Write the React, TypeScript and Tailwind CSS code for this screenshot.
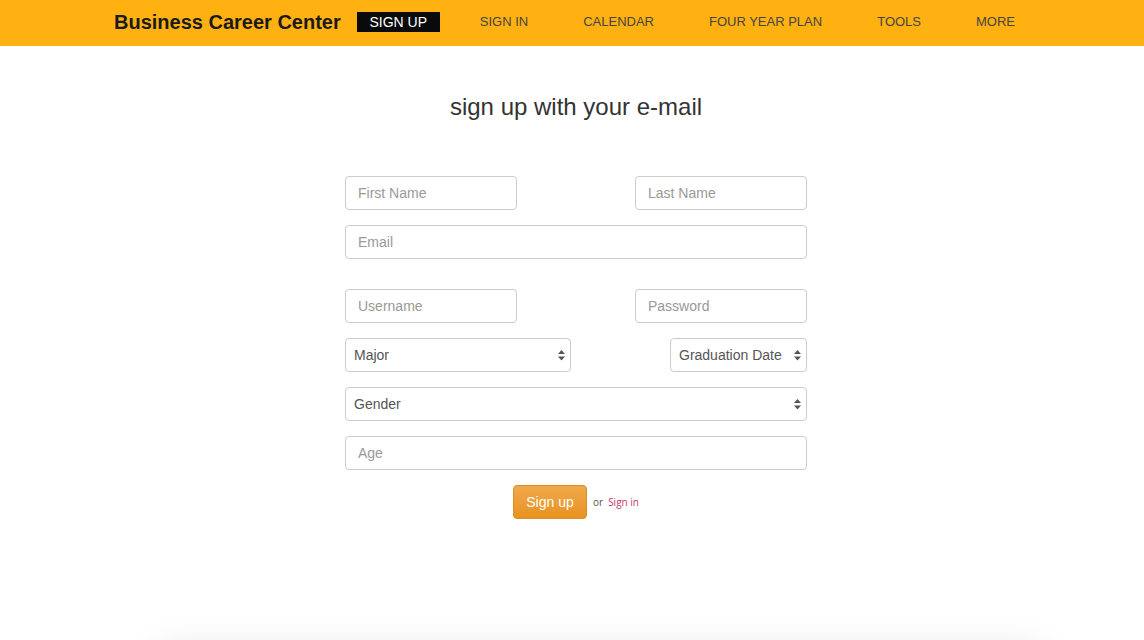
import React from 'react'

// Sign-up page for the Business Career Center.

const NAV_ITEMS = ['SIGN IN', 'CALENDAR', 'FOUR YEAR PLAN', 'TOOLS', 'MORE']

const inputCls =
  'h-[34px] rounded-[4px] border border-[#cccccc] bg-white px-3 text-[14px] text-[#555] placeholder:text-[#999] outline-none'

function Arrows() {
  return (
    <svg width="7" height="11" viewBox="0 0 7 11" className="pointer-events-none absolute right-[6px] top-[12px]" aria-hidden="true">
      <path d="M3.5 0 L7 4 L0 4 Z" fill="#555" />
      <path d="M0 6.5 L7 6.5 L3.5 10.5 Z" fill="#555" />
    </svg>
  )
}

function Select({ label, className }: { label: string; className: string }) {
  return (
    <div className={`relative ${className}`}>
      <div className="flex h-[34px] items-center rounded-[4px] border border-[#cccccc] bg-white pl-2 pr-6 text-[14px] text-[#555]">
        {label}
      </div>
      <Arrows />
    </div>
  )
}

export default function App() {
  return (
    <div className="h-[640px] overflow-hidden bg-white" style={{ fontFamily: "'Liberation Sans', Arial, sans-serif" }}>
      {/* top bar */}
      <header className="flex h-[46px] items-center bg-[#ffb111] pb-[2px] pl-[114px]">
        <span className="text-[20px] font-bold text-[#1a1a1a]">Business Career Center</span>
        <span className="ml-[16px] flex h-[20px] w-[83px] items-center justify-center bg-[#0a0a0a] text-[14px] text-white">
          SIGN UP
        </span>
        <nav className="ml-[40px] flex gap-[55px]">
          {NAV_ITEMS.map((item) => (
            <span key={item} className="text-[13px] text-[#444]">
              {item}
            </span>
          ))}
        </nav>
      </header>

      <div className="flex justify-center pl-2">
        <div className="w-[462px]">
          <h1 className="mt-[43px] -mx-20 text-center text-[24px] text-[#333]">sign up with your e-mail</h1>

          <div className="mt-[51px] flex flex-col">
            <div className="flex justify-between">
              <input className={`${inputCls} w-[172px]`} placeholder="First Name" />
              <input className={`${inputCls} w-[172px]`} placeholder="Last Name" />
            </div>
            <input className={`${inputCls} mt-[15px] w-full`} placeholder="Email" />

            <div className="mt-[30px] flex justify-between">
              <input className={`${inputCls} w-[172px]`} placeholder="Username" />
              <input className={`${inputCls} w-[172px]`} placeholder="Password" type="password" />
            </div>

            <div className="mt-[15px] flex justify-between">
              <Select label="Major" className="w-[226px]" />
              <Select label="Graduation Date" className="w-[137px]" />
            </div>

            <Select label="Gender" className="mt-[15px] w-full" />

            <input className={`${inputCls} mt-[15px] w-full`} placeholder="Age" />

            <div className="mt-[15px] flex items-center justify-center">
              <button className="h-[34px] w-[74px] rounded-[4px] border border-[#dd8d22] bg-gradient-to-b from-[#f0a94a] to-[#e8921e] text-[14px] text-white">
                Sign up
              </button>
              <span className="ml-[6px] text-[10px] text-[#555]" style={{ fontFamily: "'Open Sans', sans-serif" }}>
                or
              </span>
              <span className="ml-[5px] text-[10px] text-[#c2386e]" style={{ fontFamily: "'Open Sans', sans-serif" }}>
                Sign in
              </span>
            </div>
          </div>
        </div>
      </div>

      {/* footer panel peeking in from below */}
      <div className="ml-[160px] mt-[130px] h-[120px] w-[880px] bg-white shadow-[0_0_40px_rgba(0,0,0,0.1)]" />
    </div>
  )
}
